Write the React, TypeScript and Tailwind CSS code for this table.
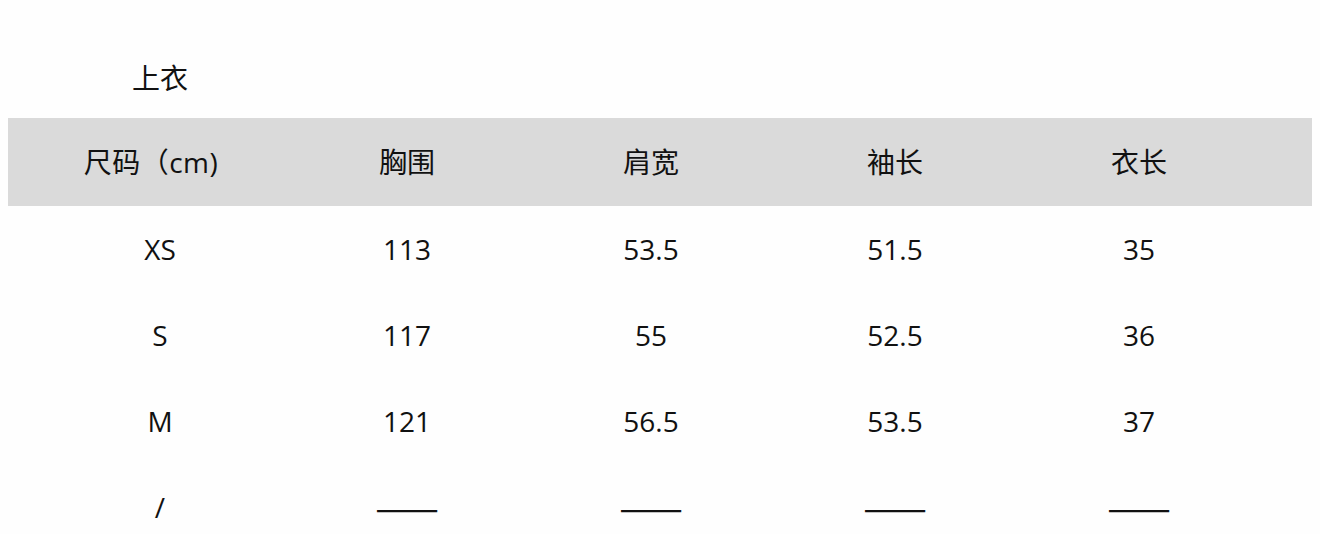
import React from 'react';

const headers = ['尺码（cm)', '胸围', '肩宽', '袖长', '衣长'];

const rows = [
  ['XS', '113', '53.5', '51.5', '35'],
  ['S', '117', '55', '52.5', '36'],
  ['M', '121', '56.5', '53.5', '37'],
  ['/', '——', '——', '——', '——'],
];

const font = { fontFamily: '"Open Sans", "Noto Sans CJK SC", sans-serif' };

const App: React.FC = () => {
  return (
    <div className="w-[1320px] h-[534px] overflow-hidden bg-[#fefefe] text-[#111] text-[28px]" style={font}>
      <div className="h-[118px] pl-[132px] pt-[58px] leading-[40px]">上衣</div>
      <div className="mx-[8px] h-[88px] bg-[#dadada] grid grid-cols-[250px_244px_244px_244px_244px] pl-[27px] items-center">
        {headers.map((h, j) => (
          <div key={h} className={j === 0 ? 'text-center pr-[18px] tracking-[0.5px]' : 'text-center'}>{h}</div>
        ))}
      </div>
      {rows.map((r, i) => (
        <div key={i} className="h-[86px] grid grid-cols-[250px_244px_244px_244px_244px] pl-[35px] items-center">
          {r.map((c, j) => (
            <div key={j} className="text-center">
              {c === '——' ? (
                <span className="inline-block font-['Noto_Sans_CJK_SC'] text-[38px] leading-none translate-y-[2px]">{c}</span>
              ) : (
                c
              )}
            </div>
          ))}
        </div>
      ))}
    </div>
  );
};

export default App;
